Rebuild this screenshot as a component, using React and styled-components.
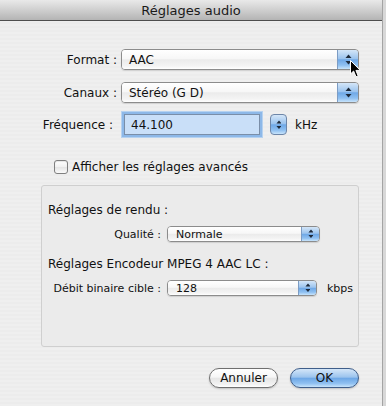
import React from "react";
import styled, { createGlobalStyle, css } from "styled-components";

const GlobalStyle = createGlobalStyle`
  html, body {
    margin: 0;
    padding: 0;
    background: #d8d8d8;
  }
  body {
    font-family: "DejaVu Sans", "Liberation Sans", sans-serif;
    color: #111;
  }
`;

const aquaBlue = css`
  background: linear-gradient(
    to bottom,
    #d4e6f8 0%,
    #9cc4ee 45%,
    #6fa8e6 52%,
    #8fc0f1 80%,
    #c8e4fb 100%
  );
`;

const Window = styled.div`
  position: relative;
  width: 382px;
  height: 406px;
  background: repeating-linear-gradient(
    to bottom,
    #efefef 0px,
    #efefef 2px,
    #ececec 2px,
    #ececec 4px
  );
  border-right: 1px solid #a4a4a4;
  display: flex;
  flex-direction: column;
  overflow: hidden;
`;

const TitleBar = styled.div`
  height: 20px;
  flex: none;
  display: flex;
  align-items: center;
  justify-content: center;
  background: linear-gradient(to bottom, #e9e9e9, #cfcfcf 50%, #b4b4b4);
  border-bottom: 1px solid #4f4f4f;
  font-size: 13px;
  color: #1a1a1a;
`;

const Form = styled.div`
  display: grid;
  grid-template-columns: 117px auto;
  column-gap: 4px;
  align-items: center;
  padding-top: 28px;
`;

const Label = styled.div`
  text-align: right;
  font-size: 12px;
  white-space: nowrap;
  margin-top: ${({ $top }) => $top || 0}px;
  padding-right: ${({ $inset }) => $inset || 0}px;
`;

const Cell = styled.div`
  display: flex;
  align-items: center;
  margin-top: ${({ $top }) => $top || 0}px;
`;

const Popup = styled.div`
  display: flex;
  width: ${({ $w }) => $w}px;
  height: ${({ $h }) => $h}px;
  box-sizing: border-box;
  border: 1px solid #8c8c8c;
  border-radius: 4px;
  overflow: hidden;
  box-shadow: 0 1px 1px rgba(0, 0, 0, 0.12);
`;

const PopupText = styled.div`
  flex: 1;
  display: flex;
  align-items: center;
  padding-left: ${({ $small }) => ($small ? 8 : 7)}px;
  font-size: ${({ $small }) => ($small ? 11 : 12)}px;
  background: linear-gradient(
    to bottom,
    #ffffff 0%,
    #f7f7f7 45%,
    #ebebeb 52%,
    #f4f4f4 85%,
    #ffffff 100%
  );
`;

const PopupArrows = styled.div`
  width: ${({ $small }) => ($small ? 17 : 20)}px;
  display: flex;
  align-items: center;
  justify-content: center;
  border-left: 1px solid #7c9cc4;
  ${aquaBlue}
`;

const TextField = styled.div`
  width: 136px;
  height: 21px;
  box-sizing: border-box;
  margin-left: 3px;
  display: flex;
  align-items: center;
  padding-left: 6px;
  font-size: 12px;
  background: #c9dff8;
  border: 1px solid #7a8ea8;
  box-shadow: 0 0 0 2px #8db8e8, 0 0 0 3px #b6d2f0;
`;

const Stepper = styled.div`
  width: 17px;
  height: 21px;
  margin-left: 10px;
  box-sizing: border-box;
  border: 1px solid #6d86a8;
  border-radius: 4px;
  display: flex;
  align-items: center;
  justify-content: center;
  ${aquaBlue}
`;

const Unit = styled.span`
  font-size: ${({ $small }) => ($small ? 11 : 12)}px;
  margin-left: ${({ $gap }) => $gap}px;
`;

const CheckRow = styled.label`
  display: flex;
  align-items: center;
  gap: 4px;
  margin: 25px 0 0 54px;
  font-size: 12px;
`;

const CheckBox = styled.span`
  width: 12px;
  height: 12px;
  border: 1px solid #7f7f7f;
  border-radius: 3px;
  background: linear-gradient(to bottom, #ffffff, #f0f0f0 50%, #e4e4e4 51%, #fafafa);
  box-shadow: inset 0 1px 1px rgba(0, 0, 0, 0.1);
`;

const Group = styled.div`
  margin: 11px 0 0 41px;
  width: 318px;
  height: 162px;
  box-sizing: border-box;
  border: 1px solid #cfcfcf;
  border-radius: 3px;
  background: #ebebeb;
  padding: 17px 0 0 6px;
  display: flex;
  flex-direction: column;
`;

const GroupHeading = styled.div`
  font-size: 12px;
  margin-top: ${({ $top }) => $top || 0}px;
`;

const SubRow = styled.div`
  display: grid;
  grid-template-columns: 113px auto;
  column-gap: 6px;
  align-items: center;
  margin-top: ${({ $top }) => $top || 0}px;
`;

const SubLabel = styled.div`
  text-align: right;
  font-size: 11px;
  white-space: nowrap;
`;

const ButtonBar = styled.div`
  display: flex;
  justify-content: flex-end;
  gap: 12px;
  margin: 21px 23px 0 0;
`;

const PillButton = styled.div`
  width: 69px;
  height: 20px;
  box-sizing: border-box;
  border-radius: 10px;
  display: flex;
  align-items: center;
  justify-content: center;
  font-size: 12px;
  border: 1px solid ${({ $primary }) => ($primary ? "#3f5e8a" : "#6f6f6f")};
  box-shadow: 0 1px 2px rgba(0, 0, 0, 0.2);
  ${({ $primary }) =>
    $primary
      ? aquaBlue
      : css`
          background: linear-gradient(
            to bottom,
            #ffffff 0%,
            #f6f6f6 45%,
            #e6e6e6 52%,
            #f2f2f2 85%,
            #ffffff 100%
          );
        `}
`;

const Cursor = styled.svg`
  position: absolute;
  left: 350px;
  top: 60px;
`;

const UpDown = ({ size = 1 }) => (
  <svg width={7 * size} height={11 * size} viewBox="0 0 7 11">
    <path d="M3.5 0.5 L6.5 4 L0.5 4 Z" fill="#1e2a3a" />
    <path d="M3.5 10.5 L6.5 7 L0.5 7 Z" fill="#1e2a3a" />
  </svg>
);

const PopupButton = ({ value, width, height = 21, small }) => (
  <Popup $w={width} $h={height}>
    <PopupText $small={small}>{value}</PopupText>
    <PopupArrows $small={small}>
      <UpDown size={small ? 0.85 : 1} />
    </PopupArrows>
  </Popup>
);

export default function App() {
  return (
    <>
      <GlobalStyle />
      <Window>
        <TitleBar>Réglages audio</TitleBar>

        <Form>
          <Label>Format :</Label>
          <Cell>
            <PopupButton value="AAC" width={238} />
          </Cell>

          <Label $top={12}>Canaux :</Label>
          <Cell $top={12}>
            <PopupButton value="Stéréo (G D)" width={238} />
          </Cell>

          <Label $top={11} $inset={4}>
            Fréquence :
          </Label>
          <Cell $top={11}>
            <TextField>44.100</TextField>
            <Stepper>
              <UpDown size={0.85} />
            </Stepper>
            <Unit $gap={8}>kHz</Unit>
          </Cell>
        </Form>

        <CheckRow>
          <CheckBox />
          Afficher les réglages avancés
        </CheckRow>

        <Group>
          <GroupHeading>Réglages de rendu :</GroupHeading>
          <SubRow $top={9}>
            <SubLabel>Qualité :</SubLabel>
            <PopupButton value="Normale" width={153} height={16} small />
          </SubRow>

          <GroupHeading $top={15}>Réglages Encodeur MPEG 4 AAC LC :</GroupHeading>
          <SubRow $top={9}>
            <SubLabel>Débit binaire cible :</SubLabel>
            <Cell>
              <PopupButton value="128" width={150} height={16} small />
              <Unit $small $gap={10}>
                kbps
              </Unit>
            </Cell>
          </SubRow>
        </Group>

        <ButtonBar>
          <PillButton>Annuler</PillButton>
          <PillButton $primary>OK</PillButton>
        </ButtonBar>

        <Cursor width="12" height="18" viewBox="0 0 12 18">
          <path
            d="M0.5 0.5 L0.5 14 L3.6 11 L6 16.8 L8.2 15.9 L5.9 10.4 L10.3 10.4 Z"
            fill="#000"
            stroke="#fff"
            strokeWidth="1"
            strokeLinejoin="round"
          />
        </Cursor>
      </Window>
    </>
  );
}
